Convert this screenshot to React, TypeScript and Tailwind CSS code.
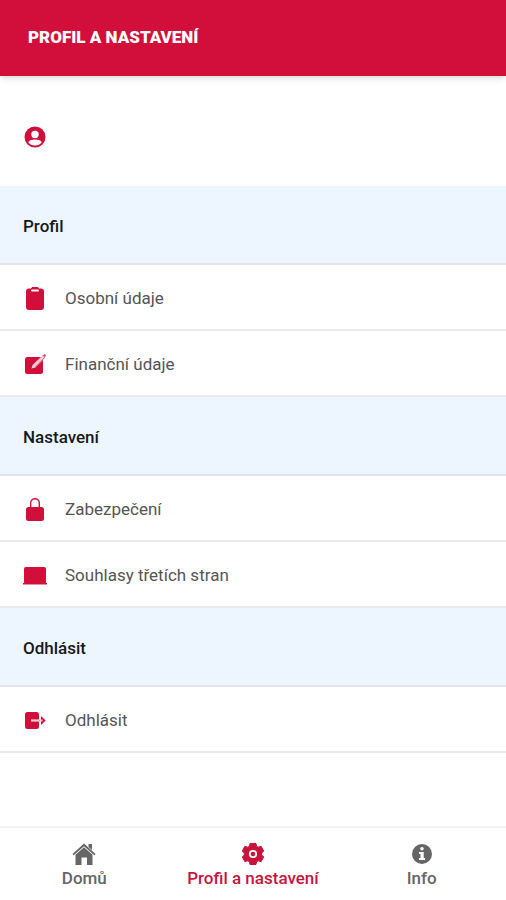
import type { ReactNode } from 'react';

interface MenuItem {
  label: string;
  icon: ReactNode;
}

interface MenuSection {
  title: string;
  items: MenuItem[];
}

function Icon({ children }: { children: ReactNode }) {
  return (
    <svg viewBox="0 0 24 24" className="size-6 shrink-0" fill="currentColor" aria-hidden="true">
      {children}
    </svg>
  );
}

const sections: MenuSection[] = [
  {
    title: 'Profil',
    items: [
      {
        label: 'Osobní údaje',
        icon: (
          <Icon>
            <path d="M6 1.500h2C8.300.6 9 0 10 0h4c1 0 1.700.6 2 1.500h2a3 3 0 0 1 3 3V20a3 3 0 0 1-3 3H6a3 3 0 0 1-3-3V4.500a3 3 0 0 1 3-3z" />
            <rect x="8" y="2.500" width="8" height="2" rx="1" className="fill-white" />
          </Icon>
        ),
      },
      {
        label: 'Finanční údaje',
        icon: (
          <Icon>
            <rect x="2" y="4" width="18" height="17" rx="2.500" />
            <path d="M8.500 15.500l1-3.500L19.500 2.500l2.500 2.500L12.500 14.500z" className="fill-[#f3cdd6]" />
            <path d="M12.500 14L22.500 3.500" fill="none" stroke="currentColor" strokeWidth="0.6" />
            <path d="M19.500 2.800l2.300-1.800 1.200 1-1.500 2z" opacity="0.8" />
          </Icon>
        ),
      },
    ],
  },
  {
    title: 'Nastavení',
    items: [
      {
        label: 'Zabezpečení',
        icon: (
          <Icon>
            <path d="M7.700 10.500V5a4.300 4.300 0 0 1 8.600 0v5.500" fill="none" stroke="currentColor" strokeWidth="1.400" />
            <rect x="3" y="9" width="18" height="14" rx="2.500" />
          </Icon>
        ),
      },
      {
        label: 'Souhlasy třetích stran',
        icon: (
          <Icon>
            <rect x="1" y="3" width="22" height="17" rx="2" />
            <path d="M0 19h24v1.500H0z" />
          </Icon>
        ),
      },
    ],
  },
  {
    title: 'Odhlásit',
    items: [
      {
        label: 'Odhlásit',
        icon: (
          <Icon>
            <rect x="2" y="3" width="14" height="17" rx="2.500" />
            <path d="M8 10.400h8v2.200H8z" className="fill-[#f3cdd6]" />
            <path d="M16 10.800h4v1.400h-4z" opacity="0.6" />
            <path d="M18 7l4.700 4.500L18 16z" />
            <path d="M16.500 10.600h3v1.800h-3z" className="fill-[#f3cdd6]" />
          </Icon>
        ),
      },
    ],
  },
];

const tabs = [
  {
    label: 'Domů',
    active: false,
    icon: (
      <Icon>
        <path d="M12 1.500L23.500 12l-1.200 1.300L12 4.200 1.700 13.300.5 12z" />
        <path d="M16.500 2H20v6l-3.500-3z" />
        <path d="M12 5.200l8.500 7.500V23H15v-7.500H9.500V23h-6V12.700z" />
      </Icon>
    ),
  },
  {
    label: 'Profil a nastavení',
    active: true,
    icon: (
      <Icon>
        <path
          strokeWidth="1"
          stroke="currentColor"
          strokeLinejoin="round"
          d="M9 1.500h6l.5 2.700 1.700 1 2.900-.9 2.600 4.700-2 2v2l2 2-2.600 4.700-2.900-.9-1.700 1-.5 2.700H9l-.5-2.700-1.700-1-2.900.9L1.300 15l2-2v-2l-2-2 2.600-4.700 2.900.9 1.700-1z"
        />
        <circle cx="12" cy="12" r="3.200" fill="none" className="stroke-white" strokeWidth="1.800" />
      </Icon>
    ),
  },
  {
    label: 'Info',
    active: false,
    icon: (
      <Icon>
        <circle cx="12" cy="12" r="10" />
        <circle cx="12" cy="6.800" r="1.800" className="fill-white" />
        <path d="M9 10h4.700v6H15v2H9v-2h1.500v-4H9z" className="fill-white" />
      </Icon>
    ),
  },
];

export default function App() {
  return (
    <div className="flex min-h-screen flex-col bg-white font-[Roboto,sans-serif]">
      {/* Header */}
      <header className="flex h-[76px] items-center bg-[#d10f3a] px-7 shadow-md">
        <h1 className="text-[17px] font-black text-white uppercase">Profil a nastavení</h1>
      </header>

      <main className="flex-1">
        {/* Signed-in user */}
        <div className="flex h-[110px] items-center px-[23px] pt-3 text-[#d10f3a]">
          <Icon>
            <circle cx="12" cy="12" r="10.500" />
            <circle cx="12" cy="9.500" r="3.700" className="fill-white" />
            <path d="M5.200 17.300c1-2.200 3.800-2.900 6.800-2.900s5.800.7 6.800 2.900A8.500 8.500 0 0 1 12 20.500a8.500 8.500 0 0 1-6.800-3.200z" className="fill-white" />
          </Icon>
        </div>

        {sections.map((section) => (
          <section key={section.title}>
            <h2 className="flex h-[79px] items-center border-b-2 border-[#e1e6ea] bg-[#edf6fe] px-[23px] pt-1 text-[17px] font-medium text-[#15191d]">
              {section.title}
            </h2>
            <ul>
              {section.items.map((item) => (
                <li key={item.label}>
                  <a href="#" className="flex h-[66px] items-center gap-[18px] border-b-2 border-[#e8eaec] px-[23px] pt-1 text-[#d10f3a]">
                    {item.icon}
                    <span className="text-[17px] text-[#555555]">{item.label}</span>
                  </a>
                </li>
              ))}
            </ul>
          </section>
        ))}
      </main>

      {/* Bottom navigation */}
      <nav className="grid h-[74px] grid-cols-3 border-t-2 border-[#f3f3f3] bg-white">
        {tabs.map((tab) => (
          <a
            key={tab.label}
            href="#"
            aria-current={tab.active ? 'page' : undefined}
            className={`flex flex-col items-center pt-[14px] text-[17px] leading-6 font-medium ${tab.active ? 'text-[#c8143c]' : 'text-[#666666]'}`}
          >
            {tab.icon}
            {tab.label}
          </a>
        ))}
      </nav>
    </div>
  );
}
